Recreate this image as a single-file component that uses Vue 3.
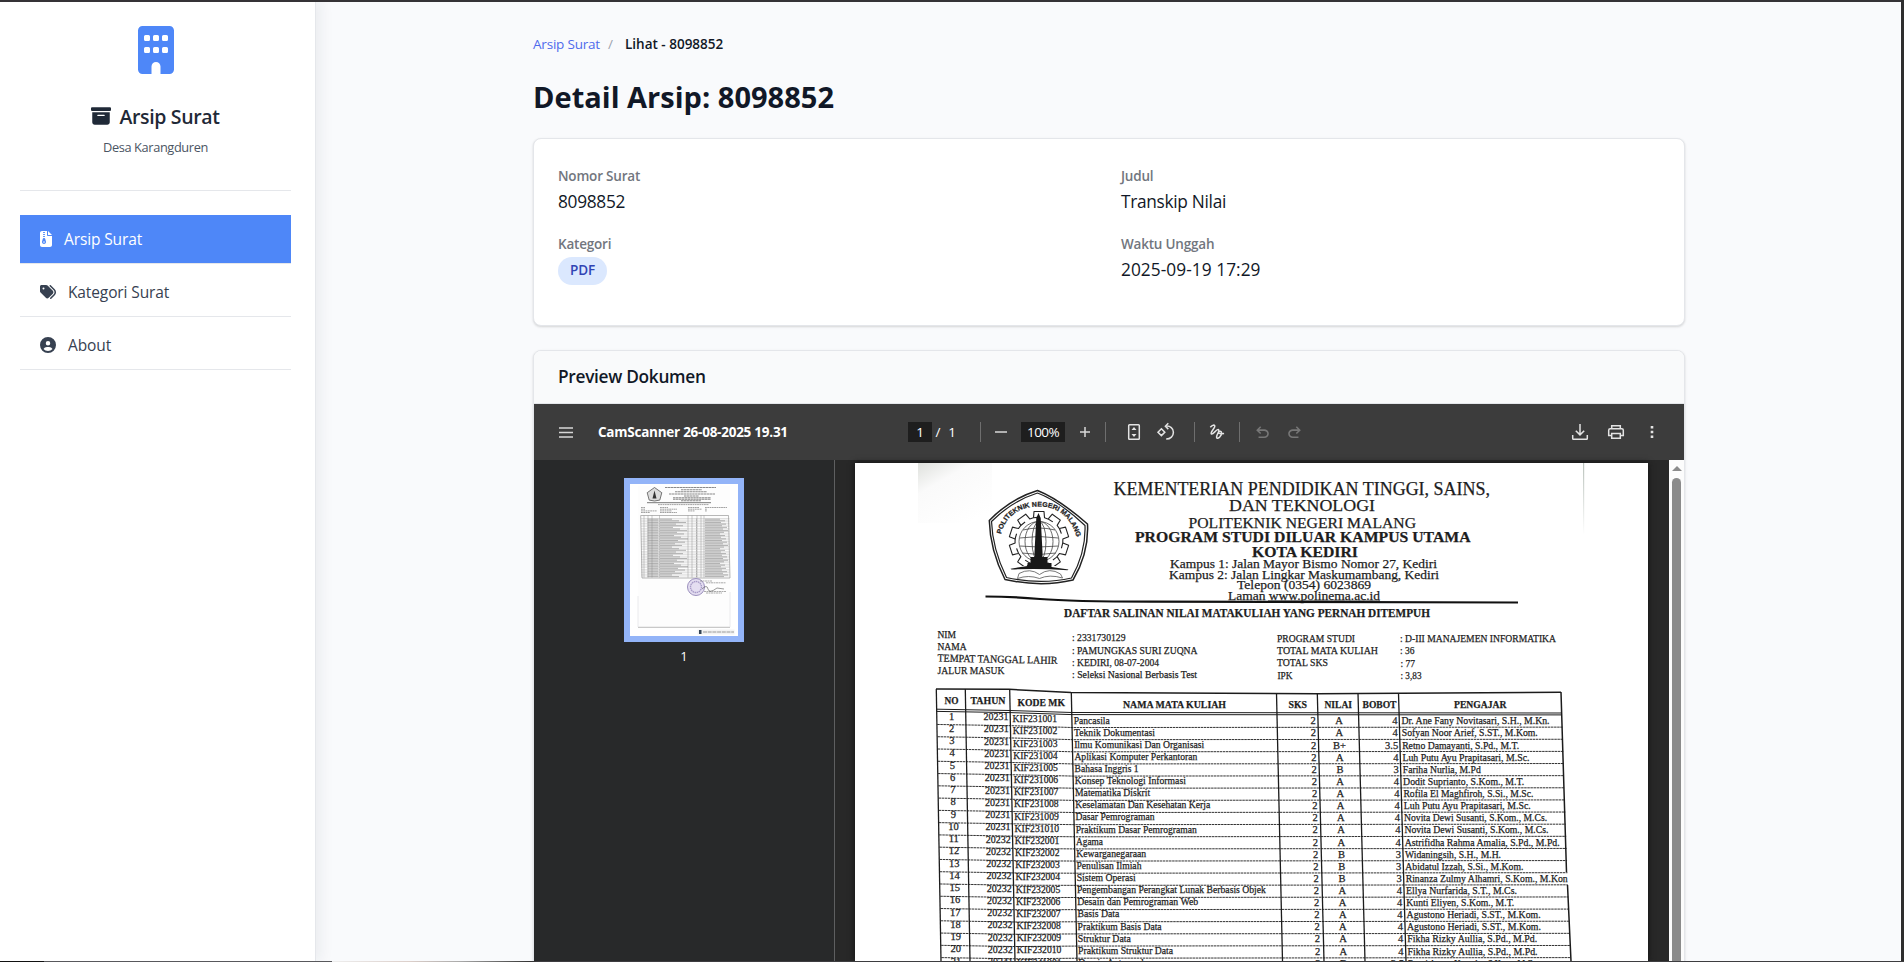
<script setup>
const fields = [
  { label: 'Nomor Surat', value: '8098852' },
  { label: 'Judul', value: 'Transkip Nilai' },
  { label: 'Kategori', value: 'PDF', badge: true },
  { label: 'Waktu Unggah', value: '2025-09-19 17:29', kind: 'date' }
]

const heading = [
  { t: 'KEMENTERIAN PENDIDIKAN TINGGI, SAINS,', x: 1113.5, y: 495.3, w: 376.5, s: 18 },
  { t: 'DAN TEKNOLOGI', x: 1229, y: 511.3, w: 146, s: 17.5 },
  { t: 'POLITEKNIK NEGERI MALANG', x: 1188.5, y: 527.5, w: 227.5, s: 15.5 },
  { t: 'PROGRAM STUDI DILUAR KAMPUS UTAMA', x: 1135, y: 542.3, w: 335.5, s: 15.5, b: 1 },
  { t: 'KOTA KEDIRI', x: 1252, y: 556.8, w: 106, s: 15.5, b: 1 },
  { t: 'Kampus 1: Jalan Mayor Bismo Nomor 27, Kediri', x: 1170, y: 568, w: 267, s: 13.5 },
  { t: 'Kampus 2: Jalan Lingkar Maskumambang, Kediri', x: 1169, y: 578.5, w: 270, s: 13.5 },
  { t: 'Telepon (0354) 6023869', x: 1237, y: 589, w: 134, s: 13.5 },
  { t: 'Laman www.polinema.ac.id', x: 1228, y: 600, w: 152, s: 13.5 },
  { t: 'DAFTAR SALINAN NILAI MATAKULIAH YANG PERNAH DITEMPUH', x: 1064, y: 616.5, w: 366, s: 12.5, b: 1 }
]

const info = [
  { t: 'NIM', x: 937.5, y: 638, w: 18.5 },
  { t: 'NAMA', x: 937.5, y: 649.8, w: 29 },
  { t: 'TEMPAT TANGGAL LAHIR', x: 937.5, y: 661.5, w: 120, r: 1.2 },
  { t: 'JALUR MASUK', x: 937.5, y: 673.8, w: 67 },
  { t: ': 2331730129', x: 1072, y: 641.3, w: 53.5 },
  { t: ': PAMUNGKAS SURI ZUQNA', x: 1072, y: 653.6, w: 125.5 },
  { t: ': KEDIRI, 08-07-2004', x: 1072, y: 665.6, w: 87 },
  { t: ': Seleksi Nasional Berbasis Test', x: 1072, y: 677.8, w: 125 },
  { t: 'PROGRAM STUDI', x: 1277, y: 642.3, w: 78 },
  { t: 'TOTAL MATA KULIAH', x: 1277, y: 654.3, w: 101 },
  { t: 'TOTAL SKS', x: 1277, y: 666.3, w: 51 },
  { t: 'IPK', x: 1277.5, y: 678.5, w: 15 },
  { t: ': D-III MANAJEMEN INFORMATIKA', x: 1400, y: 641.8, w: 156 },
  { t: ': 36', x: 1400, y: 654.3, w: 14.5 },
  { t: ': 77', x: 1400.5, y: 666.5, w: 14.5 },
  { t: ': 3,83', x: 1400.5, y: 678.5, w: 21 }
]

const columns = [
  { t: 'NO', x: 944.5, y: 704, w: 14 },
  { t: 'TAHUN', x: 970.5, y: 704, w: 35 },
  { t: 'KODE MK', x: 1017.5, y: 706, w: 47.5 },
  { t: 'NAMA MATA KULIAH', x: 1123, y: 708, w: 103 },
  { t: 'SKS', x: 1288.5, y: 708.3, w: 18.5 },
  { t: 'NILAI', x: 1324.5, y: 708.3, w: 27.5 },
  { t: 'BOBOT', x: 1362.5, y: 708.3, w: 34 },
  { t: 'PENGAJAR', x: 1454, y: 708.3, w: 52.5 }
]

const courses = [
  ['20231', 'KIF231001', 'Pancasila', 36, 'A', '4', 'Dr. Ane Fany Novitasari, S.H., M.Kn.', 148],
  ['20231', 'KIF231002', 'Teknik Dokumentasi', 81, 'A', '4', 'Sofyan Noor Arief, S.ST., M.Kom.', 136],
  ['20231', 'KIF231003', 'Ilmu Komunikasi Dan Organisasi', 130, 'B+', '3.5', 'Retno Damayanti, S.Pd., M.T.', 117],
  ['20231', 'KIF231004', 'Aplikasi Komputer Perkantoran', 123, 'A', '4', 'Luh Putu Ayu Prapitasari, M.Sc.', 127],
  ['20231', 'KIF231005', 'Bahasa Inggris 1', 64, 'B', '3', 'Fariha Nurlia, M.Pd', 78],
  ['20231', 'KIF231006', 'Konsep Teknologi Informasi', 111, 'A', '4', 'Dodit Suprianto, S.Kom., M.T.', 121],
  ['20231', 'KIF231007', 'Matematika Diskrit', 75, 'A', '4', 'Rofila El Maghfiroh, S.Si., M.Sc.', 130],
  ['20231', 'KIF231008', 'Keselamatan Dan Kesehatan Kerja', 135, 'A', '4', 'Luh Putu Ayu Prapitasari, M.Sc.', 127],
  ['20231', 'KIF231009', 'Dasar Pemrograman', 79, 'A', '4', 'Novita Dewi Susanti, S.Kom., M.Cs.', 143],
  ['20231', 'KIF231010', 'Praktikum Dasar Pemrograman', 121, 'A', '4', 'Novita Dewi Susanti, S.Kom., M.Cs.', 144],
  ['20232', 'KIF232001', 'Agama', 27, 'A', '4', 'Astrifidha Rahma Amalia, S.Pd., M.Pd.', 155],
  ['20232', 'KIF232002', 'Kewarganegaraan', 70, 'B', '3', 'Widaningsih, S.H., M.H.', 96],
  ['20232', 'KIF232003', 'Penulisan Ilmiah', 65, 'B', '3', 'Abidatul Izzah, S.Si., M.Kom.', 118],
  ['20232', 'KIF232004', 'Sistem Operasi', 59, 'B', '3', 'Rinanza Zulmy Alhamri, S.Kom., M.Kon', 162],
  ['20232', 'KIF232005', 'Pengembangan Perangkat Lunak Berbasis Objek', 189, 'A', '4', 'Ellya Nurfarida, S.T., M.Cs.', 111],
  ['20232', 'KIF232006', 'Desain dan Pemrograman Web', 121, 'A', '4', 'Kunti Eliyen, S.Kom., M.T.', 108],
  ['20232', 'KIF232007', 'Basis Data', 42, 'A', '4', 'Agustono Heriadi, S.ST., M.Kom.', 134],
  ['20232', 'KIF232008', 'Praktikum Basis Data', 84, 'A', '4', 'Agustono Heriadi, S.ST., M.Kom.', 134],
  ['20232', 'KIF232009', 'Struktur Data', 53, 'A', '4', 'Fikha Rizky Aullia, S.Pd., M.Pd.', 130],
  ['20232', 'KIF232010', 'Praktikum Struktur Data', 95, 'A', '4', 'Fikha Rizky Aullia, S.Pd., M.Pd.', 130],
  ['20241', 'KIF241001', 'Desain Antarmuka', 72, 'B', '3.5', 'Benni Agung Nugroho, S.Kom., M.Cs.', 130]
].map((c, i) => ({
  no: i + 1, year: c[0], code: c[1], name: c[2], nw: c[3], grade: c[4], weight: c[5], teacher: c[6], tw: c[7],
  yl: 719.7 + 12.24 * i,
  yk: 722.2 + 12.17 * i,
  yn: 723.5 + 12.12 * i,
  d: i * 0.23,
  e: i * 0.32
}))

const rowLine = i => {
  const a = 712.2 + 12.27 * i
  const b = 715.4 + 12.14 * i
  return `M${937 + i * 0.22} ${a}L${1010 + i * 0.25} ${a + 1.2}L${1073 + i * 0.28} ${b}L${1562 + i * 0.42} ${715 + 12.13 * i}`
}
const verticals = [[936.3, 941, 689], [965.3, 970, 689], [1009.7, 1015, 689.5], [1071.3, 1077, 692], [1276.5, 1282.5, 693], [1317.3, 1324, 693], [1358, 1365, 693], [1398.5, 1406, 693]]

const teeth = Array.from({ length: 10 }, (_, i) => i * 36)
const thumbRows = Array.from({ length: 36 }, (_, i) => ({ y: 34.5 + i * 1.64, a: 12 + (i * 7) % 17, b: 15 + (i * 5) % 9 }))
</script>

<template>
  <div class="window">
    <aside class="sidebar">
      <div class="brand">
        <svg class="building" viewBox="0 0 384 512"><path fill-rule="evenodd" d="M48 0C21.5 0 0 21.5 0 48V464c0 26.5 21.5 48 48 48h96V432c0-26.500 21.500-48 48-48s48 21.500 48 48v80h96c26.500 0 48-21.500 48-48V48c0-26.500-21.500-48-48-48H48zM80 96h32q16 0 16 16v32q0 16-16 16H80q-16 0-16-16v-32q0-16 16-16zm96 0h32q16 0 16 16v32q0 16-16 16h-32q-16 0-16-16v-32q0-16 16-16zm96 0h32q16 0 16 16v32q0 16-16 16h-32q-16 0-16-16v-32q0-16 16-16zM80 224h32q16 0 16 16v32q0 16-16 16H80q-16 0-16-16v-32q0-16 16-16zm96 0h32q16 0 16 16v32q0 16-16 16h-32q-16 0-16-16v-32q0-16 16-16zm96 0h32q16 0 16 16v32q0 16-16 16h-32q-16 0-16-16v-32q0-16 16-16z" /></svg>
        <h2>
          <svg viewBox="0 0 512 512"><path fill-rule="evenodd" d="M32 32H480c17.700 0 32 14.300 32 32V96c0 17.700-14.300 32-32 32H32C14.300 128 0 113.700 0 96V64C0 46.300 14.300 32 32 32zm0 128H480V416c0 35.300-28.700 64-64 64H96c-35.300 0-64-28.700-64-64V160zm128 80c0 8.800 7.200 16 16 16H336c8.800 0 16-7.200 16-16s-7.200-16-16-16H176c-8.800 0-16 7.200-16 16z" /></svg>
          <span>Arsip Surat</span>
        </h2>
        <p>Desa Karangduren</p>
      </div>
      <nav>
        <a class="active">
          <svg class="narrow" viewBox="0 0 384 512"><path fill-rule="evenodd" d="M64 0C28.700 0 0 28.700 0 64V448c0 35.300 28.700 64 64 64H320c35.300 0 64-28.700 64-64V160H256c-17.700 0-32-14.300-32-32V0H64zM256 0V128H384L256 0zM112 32h32a16 16 0 0 1 0 32h-32a16 16 0 0 1 0-32zm0 64h32a16 16 0 0 1 0 32h-32a16 16 0 0 1 0-32zm0 64h32a16 16 0 0 1 0 32h-32a16 16 0 0 1 0-32zM89.700 247.800c3.700-14 16.400-23.800 30.900-23.800h14.800c14.500 0 27.200 9.700 30.900 23.800l23.500 88.200c1.400 5.400 2.100 10.900 2.100 16.400c0 35.200-28.800 63.700-64 63.700s-64-28.500-64-63.700c0-5.500 .7-11.100 2.100-16.400l23.500-88.200zM112 336a16 16 0 0 0 0 32h32a16 16 0 0 0 0-32z" /></svg>
          <span>Arsip Surat</span>
        </a>
        <a>
          <svg viewBox="0 0 512 512"><path fill-rule="evenodd" d="M345 39.100L472.800 168.400c52.400 53 52.400 138.200 0 191.200L360.800 472.900c-9.300 9.400-24.500 9.500-33.900 .2s-9.500-24.500-.2-33.900L438.600 325.900c33.900-34.300 33.900-89.400 0-123.700L310.900 72.900c-9.300-9.400-9.200-24.600 .2-33.900s24.600-9.200 33.900 .2zM0 229.500V80C0 53.500 21.500 32 48 32H197.500c17 0 33.300 6.700 45.300 18.700l168 168c25 25 25 65.500 0 90.500L277.300 442.700c-25 25-65.500 25-90.500 0l-168-168C6.700 262.700 0 246.500 0 229.500zM144 144a32 32 0 1 0-64 0 32 32 0 1 0 64 0z" /></svg>
          <span>Kategori Surat</span>
        </a>
        <a>
          <svg viewBox="0 0 512 512"><path fill-rule="evenodd" d="M399 384.200C376.900 345.800 335.400 320 288 320H224c-47.400 0-88.900 25.800-111 64.200c35.200 39.200 86.200 63.800 143 63.800s107.800-24.700 143-63.800zM0 256a256 256 0 1 1 512 0A256 256 0 1 1 0 256zm256 16a72 72 0 1 0 0-144 72 72 0 1 0 0 144z" /></svg>
          <span>About</span>
        </a>
      </nav>
    </aside>

    <main>
      <div class="crumbs"><a>Arsip Surat</a><i>/</i><b>Lihat - 8098852</b></div>
      <h1>Detail Arsip: 8098852</h1>

      <section class="card details">
        <div v-for="f in fields" :key="f.label" class="field">
          <label>{{ f.label }}</label>
          <span v-if="f.badge" class="badge">{{ f.value }}</span>
          <p v-else :class="f.kind">{{ f.value }}</p>
        </div>
      </section>

      <section class="card preview">
        <header>Preview Dokumen</header>
        <div class="toolbar">
          <div class="tb-left">
            <svg class="menu" viewBox="0 0 14 11"><path d="M0 1h14M0 5.500h14M0 10h14" stroke="#d6d6d6" stroke-width="1.700" /></svg>
            <strong>CamScanner 26-08-2025 19.31</strong>
          </div>
          <div class="tb-mid">
            <span class="box page">1</span><span class="slash">/</span><span class="total">1</span>
            <i class="sep s1"></i>
            <svg class="minus" viewBox="0 0 12 12"><path d="M0 6h12" /></svg>
            <span class="box zoom">100%</span>
            <svg class="plus" viewBox="0 0 12 12"><path d="M1 6h10M6 1v10" /></svg>
            <i class="sep s2"></i>
            <svg class="ic fit" viewBox="0 0 20 20"><rect x="4.700" y="2.700" width="10.600" height="14.600" rx=".8" /><path class="solid" d="M10 5l2.500 3h-5zM10 15l2.500-3h-5z" /></svg>
            <svg class="ic rot" viewBox="0 0 20 20"><path d="M5.400 6.800L8.800 10.200 5.400 13.600 2 10.200zM9.800 4.200c4.500-.6 7.600 2.400 7.600 6 0 3.900-2.900 6.900-7.200 6.900M12.300 1.300L9.400 4.200l2.900 2.900" /></svg>
            <i class="sep s3"></i>
            <svg class="ic draw" viewBox="0 0 20 20"><path d="M3.300 5.200c1.600-1.700 3.600-2.700 4.400-1.600 1.300 1.800-5 6.700-3.400 8.300 1.700 1.500 5.300-5.600 7.200-4.200 1.800 1.400-3.300 6.300-1.700 8.200 1.500 1.400 5.300-2.300 4.700-5.800-.4-1.500-2.600-1.100-3 .2-.3 1.500 2.500 1.500 5.600 1.300" /></svg>
            <i class="sep s4"></i>
            <svg class="ic undo" viewBox="0 0 24 24"><path d="M7 19v-2h7.100q1.600 0 2.700-1T18 13.500 16.800 11t-2.700-1H7.800l2.600 2.600L9 14 4 9l5-5 1.400 1.400L7.800 8h6.300q2.400 0 4.200 1.600T20 13.500t-1.700 3.900T14.100 19z" /></svg>
            <svg class="ic undo redo" viewBox="0 0 24 24"><path transform="matrix(-1 0 0 1 24 0)" d="M7 19v-2h7.100q1.600 0 2.700-1T18 13.500 16.800 11t-2.700-1H7.800l2.600 2.600L9 14 4 9l5-5 1.400 1.400L7.800 8h6.300q2.400 0 4.200 1.600T20 13.500t-1.700 3.900T14.100 19z" /></svg>
          </div>
          <div class="tb-right">
            <svg class="ic" viewBox="0 0 20 20"><path d="M10 2v10.500M5.800 8.700L10 12.900l4.200-4.200M2.700 13v3.500q0 .8.800.8h13q.8 0 .8-.8V13" /></svg>
            <svg class="ic" viewBox="0 0 20 20"><path d="M5.700 6.500V3.700h8.600v2.800M5.700 13.500h-3V8.300q0-1.500 1.500-1.500h11.600q1.500 0 1.500 1.500v5.200h-3M5.700 11.500h8.600v4.800H5.700z" /></svg>
            <svg class="ic" viewBox="0 0 20 20"><path class="solid" d="M8.700 4h2.600v2.600H8.700zM8.700 8.700h2.600v2.600H8.700zM8.700 13.400h2.600V16H8.700z" /></svg>
          </div>
        </div>

        <div class="viewer">
          <div class="thumbs">
            <div class="thumb">
              <svg viewBox="0 0 108 152">
                <path d="M8 2h92v141H8z" fill="#fdfdfd" />
                <path d="M8 143.300h92" stroke="#aaa" stroke-width=".8" />
                <path d="M8 112v31M100 108v35" stroke="#e4e4e8" stroke-width=".8" />
                <path d="M24.500 3.500l7.300 5.200-2 7.400-5.300.9-5.300-.9-2-7.400z" fill="#ddd" stroke="#555" stroke-width=".8" />
                <path d="M24.500 6.500l2 8h-4z" fill="#333" />
                <g stroke="#8a8a8a" stroke-width="1.100">
                  <path stroke-dasharray="2.500 .4" d="M35 3.500h51M51 5.700h21M45 7.800h32M39 10h46M54 12h15M43 13.800h38M43 15.300h38M51 16.800h20" />
                  <path d="M17 18.700h64" stroke="#555" stroke-width=".8" />
                  <path stroke-dasharray="1.800 .5" stroke-width=".8" d="M28 20.600h51M11 23.500h4M11 25.200h4M11 26.900h16M11 28.500h9M30 23.500h8M30 25.200h17M30 26.900h12M30 28.500h17M58 23.500h11M58 25.200h14M58 26.900h7M75 23.500h22M75 25.200h2M75 26.900h2" />
                </g>
                <path d="M10.700 31.500H98.500L100 94H12z" fill="none" stroke="#888" stroke-width=".6" />
                <g stroke="#888" stroke-width=".6">
                  <path v-for="r in thumbRows" :key="r.y" :d="`M11 ${r.y}H99.500`" opacity=".4" />
                  <path v-for="r in thumbRows" :key="'t' + r.y" :d="`M17.500 ${r.y + .7}h11M30 ${r.y + .7}h${r.a}M66 ${r.y + .7}h1M75 ${r.y + .7}h${r.b}`" stroke="#666" opacity=".8" />
                  <path opacity=".7" d="M14 31.500v62M18 31.500v62M22 31.500v62M29.500 31.500v62M58 31.500v62M62 31.500v62M67 31.500v62M71 31.500v62M74 31.500v62" />
                </g>
                <circle cx="66" cy="103" r="8.500" fill="#e4def1" stroke="#9b90bd" stroke-width="1" />
                <circle cx="66" cy="103" r="5.500" fill="none" stroke="#a79bc7" stroke-width="1.400" stroke-dasharray="1.500 .6" />
                <path stroke="#888" stroke-width=".7" stroke-dasharray="2 .5" d="M70 97h12M76 98.800h20M74 107.500h22M76 109h16" />
                <path d="M72 105q5-5 6 0t9-1l7 1" fill="none" stroke="#555" stroke-width=".6" />
                <path d="M67.500 145.500h37v5h-37z" fill="#f3f3f3" /><path d="M69 146h2.500v4H69z" fill="#345" />
                <path d="M73 148h31" stroke="#999" stroke-width="1" stroke-dasharray="4 .7" />
              </svg>
            </div>
            <span>1</span>
          </div>

          <div class="canvas">
            <svg class="paper" viewBox="855 463 793 498">
              <defs>
                <linearGradient id="corner" x1="0" y1="0" x2=".7" y2="1"><stop offset="0" stop-color="#dfe1dd" /><stop offset=".35" stop-color="#fafafa" /><stop offset="1" stop-color="#fff" /></linearGradient>
                <linearGradient id="edge" x1="0" y1="0" x2="0" y2="1"><stop offset="0" stop-color="#bbc3bd" /><stop offset="1" stop-color="#fff" /></linearGradient>
                <path id="arc" d="M1001 534.500Q1008 507 1039 506.500Q1069 507 1077.500 540" />
              </defs>
              <path d="M855 463h793v498H855z" fill="#fff" />
              <path d="M918 463h74v60h-74z" fill="url(#corner)" />
              <path d="M1583 463h1.200v72h-1.200z" fill="url(#edge)" />

              <g fill="none" stroke="#222" stroke-linejoin="round">
                <path stroke-width="1.500" d="M1037.500 490.500Q1059 499 1087.500 524Q1089 553 1073 580Q1041 587.500 1005 579.500Q990 550 989.300 520.500Q1010 499 1037.500 490.500z" />
                <path stroke-width="1.200" d="M1037.500 493Q1059 501 1085 525.500Q1086 552 1071.500 578Q1041 585 1006.500 577.500Q992.500 549 991.500 521.500Q1012 501 1037.500 493z" />
                <g stroke-width="1.100">
                  <path v-for="a in teeth" :key="a" :transform="`rotate(${a} 1039 541)`" d="M1033.500 517.700L1034 511.500H1044L1044.500 517.700Q1048.500 518.500 1052.800 521.900" />
                </g>
                <path fill="#fff" stroke="none" d="M1012 566h56v12h-56z" />
                <g stroke-width=".8" stroke="#444">
                  <circle cx="1039" cy="541.500" r="20" /><ellipse cx="1039" cy="541.500" rx="14" ry="20" /><ellipse cx="1039" cy="541.500" rx="7" ry="20" />
                  <path d="M1023 530q16-4 32 0M1019.500 538q19.500-3 39 0M1019.500 546q19.500 2 39 0M1022 553q17 3 34 0" />
                </g>
                <path d="M1019 573.500q11-6 20.500 1 10-7.500 21-.5l2 4q-13-4-23 .5-11-4-22 0z" stroke-width=".8" stroke="#555" fill="#fff" />
              </g>
              <path fill="#181818" d="M1038.500 513l2.200 5 1.800 34v5h5v6h4v4l17 2.500-1 .8q-28-2.300-56-.8l-1-.8 17-2.700v-3h3v-6h4v-5l1.800-34z" />
              <text class="seal"><textPath href="#arc" textLength="104" lengthAdjust="spacingAndGlyphs">POLITEKNIK NEGERI MALANG</textPath></text>

              <text v-for="h in heading" :key="h.t" :x="h.x" :y="h.y" :textLength="h.w" lengthAdjust="spacingAndGlyphs" :font-size="h.s" :font-weight="h.b ? 700 : 400">{{ h.t }}</text>
              <path d="M1268 601h112" stroke="#222" />
              <path d="M985.500 596.500Q1010 596.500 1040 599T1150 601.700L1518 602.500" fill="none" stroke="#111" stroke-width="2.200" />
              <text v-for="n in info" :key="n.t" :x="n.x" :y="n.y" :textLength="n.w" lengthAdjust="spacingAndGlyphs" font-size="10.800" :transform="n.r ? `rotate(${n.r} ${n.x} ${n.y})` : null">{{ n.t }}</text>

              <g fill="none" stroke="#1c1c1c">
                <path d="M936 689L1009 689.300 1071 692.600 1318 693.800 1561 692.300" stroke-width="1.500" />
                <path d="M937 709.200L1010 710.500 1072 712.500 1562 713" stroke-width="1" />
                <path d="M937 711.400L1010 712.600 1072 714.600 1562 714.900" stroke-width="1" />
                <path v-for="v in verticals" :key="v[0]" :d="`M${v[0]} ${v[2]}L${v[1]} 961`" stroke-width="1.300" />
                <path d="M1561 692L1566.500 872M1567.500 885L1571 961" stroke-width="1.500" />
                <path v-for="i in 20" :key="i" :d="rowLine(i)" stroke-width=".9" stroke-dasharray="2.500 .6" />
              </g>
              <text v-for="c in columns" :key="c.t" :x="c.x" :y="c.y" :textLength="c.w" lengthAdjust="spacingAndGlyphs" font-size="10.800" font-weight="700">{{ c.t }}</text>
              <g v-for="c in courses" :key="c.no" font-size="10.500">
                <text :x="951.500 + c.d" :y="c.yl" text-anchor="middle">{{ c.no }}</text>
                <text :x="983.500 + c.d" :y="c.yl + .5" textLength="25" lengthAdjust="spacingAndGlyphs">{{ c.year }}</text>
                <text :x="1012.500 + c.d" :y="c.yk" textLength="44.500" lengthAdjust="spacingAndGlyphs">{{ c.code }}</text>
                <text :x="1073.700 + c.d" :y="c.yn" :textLength="c.nw" lengthAdjust="spacingAndGlyphs">{{ c.name }}</text>
                <text :x="1315.800 + c.d" :y="c.yn + .8" text-anchor="end">2</text>
                <text :x="1339 + c.d" :y="c.yn + .8" text-anchor="middle">{{ c.grade }}</text>
                <text :x="1397.500 + c.e" :y="c.yn + .8" text-anchor="end">{{ c.weight }}</text>
                <text :x="1401.500 + c.e" :y="c.yn + .8" :textLength="c.tw" lengthAdjust="spacingAndGlyphs">{{ c.teacher }}</text>
              </g>
            </svg>
          </div>
          <div class="scroll"><i class="up"></i><i class="bar"></i></div>
        </div>
      </section>
    </main>
    <div class="edge-top"></div>
    <div class="edge-right"></div>
    <div class="edge-bottom"></div>
  </div>
</template>

<style>
html, body { margin: 0; overflow: hidden; }
</style>

<style scoped>
* { box-sizing: border-box; }
.window { position: relative; width: 1904px; height: 962px; overflow: hidden; display: flex; background: #f9fafc; color: #111827; font-family: "Open Sans", "Noto Sans", sans-serif; }
h1, h2, p { margin: 0; }
svg { display: block; flex: none; }
span, a, b, strong, label, p, h1, header { white-space: nowrap; }

.sidebar { width: 316px; flex: none; background: #fff; border-right: 1px solid #e5e7eb; box-shadow: 4px 0 14px rgba(30, 40, 60, .07); padding: 26px 24px 0 20px; }
.brand { height: 165px; border-bottom: 1px solid #e5e7eb; display: flex; flex-direction: column; align-items: center; }
.building { width: 36px; height: 48px; fill: #4e87f8; }
.brand h2 { margin-top: 28px; height: 30px; display: flex; align-items: center; gap: 8px; font-size: 19.500px; font-weight: 600; color: #1f2937; line-height: 30px; letter-spacing: -.35px; }
.brand h2 svg { width: 20px; height: 20px; fill: #1f2937; margin-top: -2px; }
.brand p { margin-top: 5px; font-size: 12.800px; line-height: 20px; color: #4b5563; letter-spacing: -.38px; }
nav { margin-top: 24px; display: flex; flex-direction: column; gap: 4px; }
nav a { height: 49px; padding: 0 20px; display: flex; align-items: center; gap: 12px; border-bottom: 1px solid #e5e7eb; color: #374151; font-size: 15.500px; letter-spacing: -.12px; }
nav svg { width: 16px; height: 16px; fill: #374151; }
nav svg.narrow { width: 12px; }
nav .active { color: #fff; background: #4e87f8 padding-box; }
nav .active svg { fill: #fff; }

main { width: 1152px; margin-left: 217px; padding-top: 34px; display: flex; flex-direction: column; }
.crumbs { display: flex; height: 20px; line-height: 20px; font-size: 13.500px; }
.crumbs a { color: #4f6bec; width: 75px; letter-spacing: -.2px; }
.crumbs i { font-style: normal; color: #9ca3af; width: 17px; }
.crumbs b { font-weight: 600; letter-spacing: 0; }
h1 { margin-top: 23px; height: 40px; line-height: 40px; font-size: 29px; font-weight: 700; letter-spacing: .02px; }
.card { flex: none; border: 1px solid #e4e6ea; border-radius: 8px; background: #fff; box-shadow: 0 1px 3px rgba(0, 0, 0, .1), 0 1px 2px rgba(0, 0, 0, .06); }
.details { margin-top: 21px; height: 188px; padding: 27px 24px; display: grid; grid-template-columns: 1fr 1fr; grid-template-rows: 44px 56px; column-gap: 24px; row-gap: 24px; }
.field label { display: block; font-size: 13.500px; line-height: 20px; font-weight: 600; color: #72767e; letter-spacing: -.2px; }
.field p { margin-top: 3px; font-size: 17.300px; line-height: 26px; letter-spacing: -.3px; }
.field .date { letter-spacing: .05px; }
.badge { display: inline-block; margin-top: 3px; height: 28px; line-height: 27px; padding: 0 12px; border-radius: 14px; background: #dbe8fe; color: #3044b4; font-size: 13.500px; font-weight: 600; letter-spacing: -.1px; }
.preview { margin-top: 24px; height: 640px; overflow: hidden; }
.preview header { height: 53px; line-height: 52px; padding-left: 24px; background: #f9fafb; border-bottom: 1px solid #e5e7eb; font-size: 17.300px; font-weight: 600; letter-spacing: -.3px; }

.toolbar { height: 56px; background: #3c3c3c; color: #fff; display: grid; grid-template-columns: 374px 1fr auto; align-items: center; }
.tb-left, .tb-mid, .tb-right { display: flex; align-items: center; }
.tb-left { padding-left: 25px; }
.menu { width: 14px; height: 11px; }
.tb-left strong { margin-left: 25px; font-size: 13.500px; font-weight: 700; line-height: 20px; letter-spacing: -.25px; }
.tb-mid { font-size: 13.500px; }
.box { background: #1e1e1e; height: 20px; line-height: 20px; text-align: center; }
.page { width: 24px; }
.slash { width: 12px; text-align: center; }
.total { width: 16px; text-align: center; }
.zoom { width: 44px; margin-left: 14px; letter-spacing: -.6px; }
.sep { width: 1px; height: 20px; background: #6e6e6e; }
.s1 { margin-left: 20px; } .s2 { margin-left: 14px; } .s3 { margin-left: 18px; } .s4 { margin-left: 12px; }
.minus, .plus { width: 12px; height: 12px; margin-left: 14px; stroke: #d8d8d8; stroke-width: 1.500; }
.ic { width: 20px; height: 20px; fill: none; stroke: #e3e3e3; stroke-width: 1.500; }
.ic .solid { fill: #e3e3e3; stroke: none; }
.fit { margin-left: 18px; } .rot { margin-left: 12px; } .draw { margin-left: 12px; }
.undo { margin-left: 13px; width: 19px; height: 19px; fill: #777; stroke: none; }
.redo { margin-left: 13px; }
.tb-right { padding-right: 22px; gap: 16px; }

.viewer { display: flex; height: 530px; background: #282828; }
.thumbs { width: 301px; border-right: 1px solid #5e5f60; background: #28292a; padding: 18px 0 0; display: flex; flex-direction: column; align-items: center; }
.thumb { width: 120px; height: 164px; background: #93b4f8; padding: 6px; }
.thumb svg { width: 108px; height: 152px; background: #fff; }
.thumbs span { margin-top: 4px; color: #fff; font-size: 13px; line-height: 20px; }
.canvas { flex: 1; padding: 3px 0 0 20px; }
.paper { width: 793px; height: 498px; box-shadow: 0 0 6px #111; font-family: "Liberation Serif", "Times New Roman", serif; fill: #1d1d1d; }
.paper text { stroke: #1d1d1d; stroke-width: .25px; }
.paper .seal { font: 700 6.800px "Liberation Sans", sans-serif; }
.scroll { width: 15px; background: #fcfcfc; display: flex; flex-direction: column; align-items: center; padding-top: 6px; }
.up { width: 0; height: 0; border: 5px solid transparent; border-top: 0; border-bottom-color: #8b8b8b; }
.bar { margin-top: 7px; width: 9px; flex: 1; border-radius: 5px; background: #8b8b8b; }

.edge-top { position: absolute; left: 0; right: 0; top: 0; height: 2px; background: #353336; }
.edge-right { position: absolute; right: 0; top: 0; bottom: 0; width: 3px; background: #2e2e2e; }
.edge-bottom { position: absolute; left: 0; right: 0; bottom: 0; height: 1px; background: linear-gradient(90deg, #111 44px, #58585c 44px, #58585c 332px, #eee 332px, #dccfca 410px, #aaa 460px, #333 530px, #3d3d40 540px); }
</style>
